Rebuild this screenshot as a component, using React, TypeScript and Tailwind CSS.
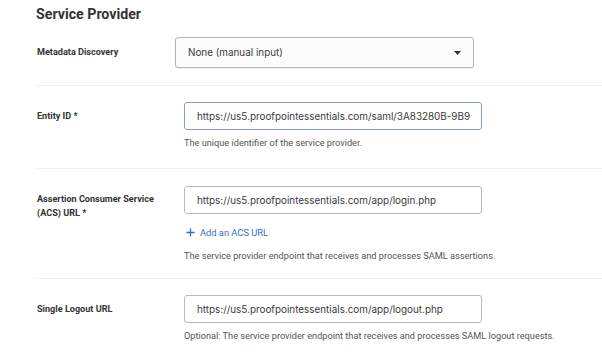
import type { ReactNode } from "react";

const FONT = { fontFamily: "Roboto, 'Noto Sans', sans-serif" };
const FIELD_FONT = { fontFamily: "Inter, Roboto, sans-serif" };

function Row({ label, children }: { label: ReactNode; children: ReactNode }) {
  return (
    <div className="flex border-b border-[#f0f0f0]">
      <div className="w-[148px] shrink-0 pl-[1px] text-[9.1px] font-bold leading-[14px] text-[#333]">{label}</div>
      <div className="flex-1">{children}</div>
    </div>
  );
}

function TextInput({ value, focused }: { value: string; focused?: boolean }) {
  return (
    <div
      className={`flex h-[28px] w-[298px] items-center overflow-hidden whitespace-nowrap rounded-[3px] border bg-white pl-[12px] text-[9.9px] text-[#3a3a3a] ${
        focused ? "border-[#7f9fd6]" : "border-[#b9b9b9]"
      }`}
      style={FIELD_FONT}
    >
      {value}
    </div>
  );
}

function Help({ children }: { children: ReactNode }) {
  return <p className="whitespace-nowrap text-[9.2px] leading-[12px] text-[#555]">{children}</p>;
}

export default function App() {
  return (
    <div className="h-[358px] w-[602px] overflow-hidden bg-white pl-[36px]" style={FONT}>
      <h2 className="pt-[4px] text-[14.2px] font-bold leading-[20px] text-[#333]">Service Provider</h2>

      {/* Metadata discovery */}
      <div className="flex items-center border-b border-[#f0f0f0] pb-[17px] pt-[13px]">
        <div className="w-[139px] shrink-0 pl-[1px] text-[9.1px] font-bold text-[#333]">Metadata Discovery</div>
        <div
          className="flex h-[31px] w-[299px] items-center justify-between rounded-[3px] border border-[#b5b5b5] bg-[#fcfcfc] pl-[12px] pr-[12px] text-[9.9px] text-[#3a3a3a] shadow-[0_1px_1px_rgba(0,0,0,0.06)]"
          style={FIELD_FONT}
        >
          <span>None (manual input)</span>
          <svg width="7" height="4" viewBox="0 0 7 4">
            <path d="M0 0h7L3.5 4z" fill="#333" />
          </svg>
        </div>
      </div>

      {/* Entity ID */}
      <Row label={<div className="pt-[23px]">Entity ID *</div>}>
        <div className="pb-[19px] pt-[16px]">
          <TextInput value="https://us5.proofpointessentials.com/saml/3A83280B-9B9" focused />
          <div className="pt-[7px]">
            <Help>The unique identifier of the service provider.</Help>
          </div>
        </div>
      </Row>

      {/* ACS URL */}
      <Row
        label={
          <div className="pt-[23px]">
            Assertion Consumer Service
            <br />
            (ACS) URL *
          </div>
        }
      >
        <div className="pb-[16px] pt-[17px]">
          <TextInput value="https://us5.proofpointessentials.com/app/login.php" />
          <div className="flex items-center gap-[5px] pl-[2px] pt-[12px] text-[9.3px] text-[#2f6fd1]">
            <svg width="9" height="9" viewBox="0 0 9 9">
              <path d="M4.5 0.5v8M0.5 4.5h8" stroke="#2f6fd1" strokeWidth="1.3" />
            </svg>
            Add an ACS URL
          </div>
          <div className="pt-[10px]">
            <Help>The service provider endpoint that receives and processes SAML assertions.</Help>
          </div>
        </div>
      </Row>

      {/* Single logout */}
      <div className="flex">
        <div className="w-[148px] shrink-0 pl-[1px] pt-[24px] text-[9.1px] font-bold text-[#333]">Single Logout URL</div>
        <div className="pt-[16px]">
          <TextInput value="https://us5.proofpointessentials.com/app/logout.php" />
          <div className="pt-[7px]">
            <Help>Optional: The service provider endpoint that receives and processes SAML logout requests.</Help>
          </div>
        </div>
      </div>
    </div>
  );
}
